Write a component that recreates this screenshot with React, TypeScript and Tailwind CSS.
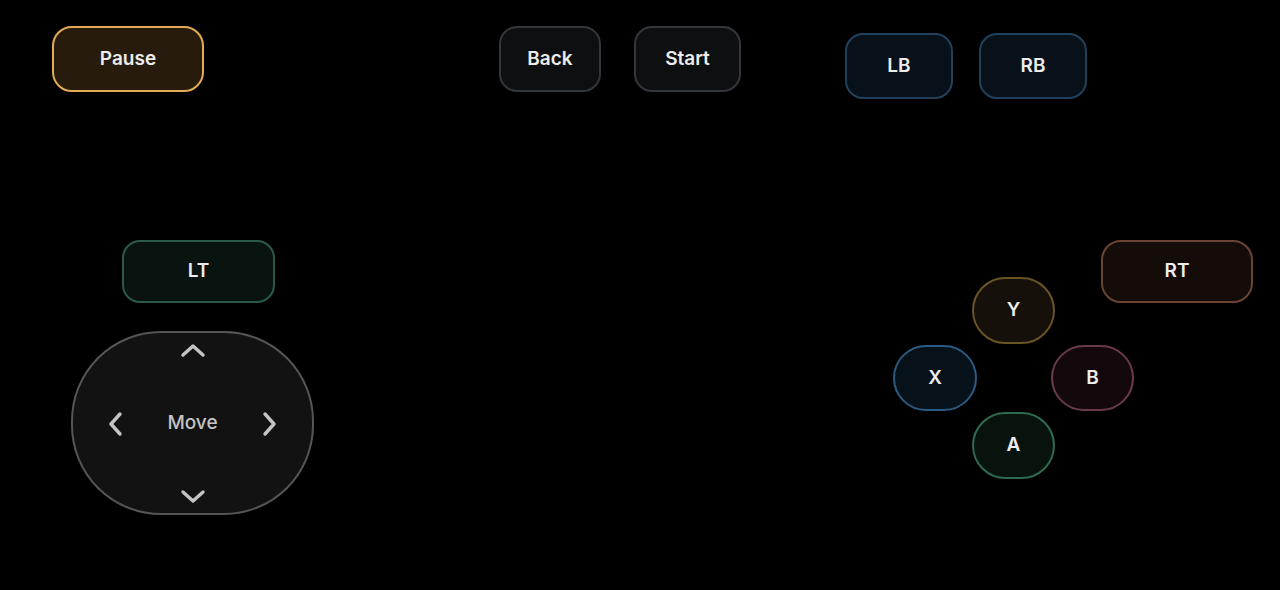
import React from 'react';

const font = { fontFamily: 'Inter, "Noto Sans", sans-serif' };

const Pad: React.FC<{ label: string; className?: string }> = ({ label, className = '' }) => (
  <button
    className={`flex items-center justify-center border-2 text-[19px] font-semibold text-[#ececec] shrink-0 ${className}`}
  >
    {label}
  </button>
);

const Chevron: React.FC<{ dir: 'up' | 'down' | 'left' | 'right' }> = ({ dir }) => {
  const vertical = dir === 'up' || dir === 'down';
  const w = vertical ? 26 : 16;
  const h = vertical ? 16 : 26;
  const points = {
    up: '3,13 13,4 23,13',
    down: '3,3 13,12 23,3',
    left: '13,3 4,13 13,23',
    right: '3,3 12,13 3,23',
  }[dir];
  return (
    <svg width={w} height={h} viewBox={`0 0 ${w} ${h}`} fill="none">
      <polyline points={points} stroke="#c4c4c4" strokeWidth="3.4" strokeLinecap="round" strokeLinejoin="round" />
    </svg>
  );
};

export default function App() {
  return (
    <div className="h-[590px] w-[1280px] bg-black overflow-hidden flex flex-col" style={font}>
      {/* top row */}
      <div className="flex items-start pt-[26px] pl-[52px]">
        <Pad label="Pause" className="w-[152px] h-[66px] rounded-[20px] border-[#e3ac52] bg-[#261b0c]" />
        <Pad label="Back" className="ml-[295px] w-[102px] h-[66px] rounded-[18px] border-[#33363b] bg-[#0e0f11]" />
        <Pad label="Start" className="ml-[33px] w-[107px] h-[66px] rounded-[18px] border-[#33363b] bg-[#0e0f11]" />
        <Pad label="LB" className="ml-[104px] mt-[7px] w-[108px] h-[66px] rounded-[18px] border-[#22405a] bg-[#08111a]" />
        <Pad label="RB" className="ml-[26px] mt-[7px] w-[108px] h-[66px] rounded-[18px] border-[#22405a] bg-[#08111a]" />
      </div>

      {/* lower area */}
      <div className="flex justify-between items-start mt-[141px] pl-[71px] pr-[27px]">
        <div className="flex flex-col items-start">
          <Pad label="LT" className="ml-[51px] w-[153px] h-[63px] rounded-[18px] border-[#2c5a49] bg-[#09130f]" />
          <div className="mt-[28px] w-[243px] h-[184px] rounded-[90px] border-2 border-[#555] bg-[#121212] flex flex-col items-center justify-between pt-[9px] pb-[8px]">
            <Chevron dir="up" />
            <div className="flex w-full items-center justify-between px-[34px]">
              <Chevron dir="left" />
              <span className="text-[19px] font-medium text-[#c4c4c4]">Move</span>
              <Chevron dir="right" />
            </div>
            <Chevron dir="down" />
          </div>
        </div>

        <div className="flex flex-col items-end w-[360px]">
          <Pad label="RT" className="w-[152px] h-[63px] rounded-[20px] border-[#6a4334] bg-[#140c09]" />
          <div className="self-start mt-[-26px] w-[241px] flex flex-col items-center gap-[1px]">
            <Pad label="Y" className="w-[83px] h-[67px] rounded-[34px] border-[#6a5325] bg-[#15110a]" />
            <div className="flex w-full justify-between">
              <Pad label="X" className="w-[84px] h-[66px] rounded-[34px] border-[#2b5a80] bg-[#07111a]" />
              <Pad label="B" className="w-[83px] h-[66px] rounded-[34px] border-[#6a3a4b] bg-[#13090d]" />
            </div>
            <Pad label="A" className="w-[83px] h-[67px] rounded-[34px] border-[#2e6a50] bg-[#08130e]" />
          </div>
        </div>
      </div>
    </div>
  );
}
